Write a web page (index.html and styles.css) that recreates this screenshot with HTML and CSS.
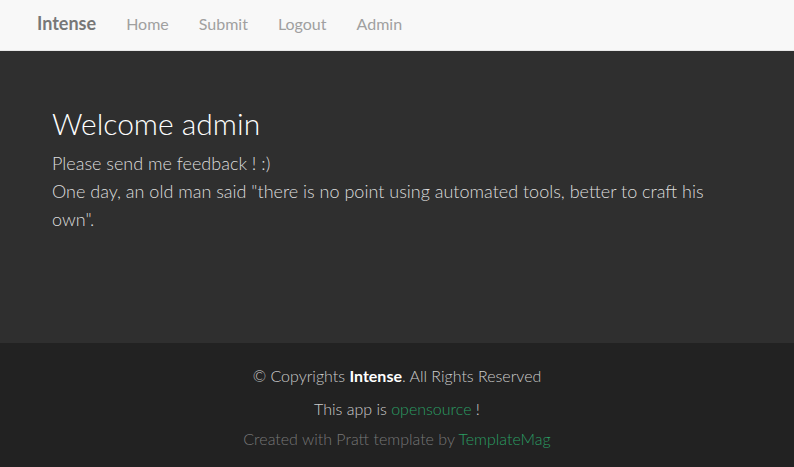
FILE: index.html
```html
<!DOCTYPE html>
<html>
<head>
<meta charset="utf-8">
<link rel="stylesheet" href="styles.css">
</head>
<body>
<nav class="navbar">
  <div class="container nav-inner">
    <a class="brand">Intense</a>
    <a class="nav-link">Home</a>
    <a class="nav-link">Submit</a>
    <a class="nav-link">Logout</a>
    <a class="nav-link">Admin</a>
  </div>
</nav>
<section class="hero">
  <div class="container hero-inner">
    <h1 class="title">Welcome admin</h1>
    <p class="text">Please send me feedback ! :)<br>One day, an old man said "there is no point using automated tools, better to craft his own".</p>
  </div>
</section>
<footer class="footer">
  <p class="copy">© Copyrights <strong>Intense</strong>. All Rights Reserved</p>
  <p class="app">This app is <a class="green">opensource</a> !</p>
  <p class="credit">Created with Pratt template by <a class="green">TemplateMag</a></p>
</footer>
</body>
</html>
```
FILE: styles.css
```css
* { box-sizing: border-box; }
html, body { margin: 0; padding: 0; }
body {
  font-family: Lato, "Open Sans", sans-serif;
  background: #222;
  height: 467px;
  overflow: hidden;
}
.container {
  width: 750px;
  margin: 0 auto;
  padding: 0 15px;
}
.navbar {
  height: 51px;
  background: #f8f8f8;
  border-bottom: 1px solid #e7e7e7;
}
.nav-inner {
  display: flex;
  align-items: center;
  height: 46px;
}
.brand {
  font-size: 18px;
  font-weight: 700;
  color: #777;
  padding: 0 15px;
  margin-left: -15px;
}
.nav-link {
  font-size: 16px;
  font-weight: 400;
  color: #a0a0a0;
  padding: 0 15px;
}
.hero {
  background: #2f2f2f;
  height: 292px;
}
.hero-inner {
  padding: 54px 30px 0;
}
.title {
  margin: 0;
  font-family: Lato, sans-serif;
  font-weight: 300;
  font-size: 30px;
  line-height: 36px;
  color: #fff;
}
.text {
  margin: 8px 0 0;
  font-size: 18px;
  line-height: 28px;
  font-weight: 300;
  color: #ddd;
}
.footer {
  background: #222;
  text-align: center;
  padding-top: 22px;
  font-size: 16px;
}
.footer p { margin: 0; line-height: 22px; }
.copy { color: #ccc; font-weight: 300; }
.copy strong { color: #fff; font-weight: 700; }
.app { color: #ccc; margin-top: 11px !important; font-weight: 300; }
.credit { color: #777; margin-top: 8px !important; font-weight: 300; }
.green { color: #2a9d62; }
```
